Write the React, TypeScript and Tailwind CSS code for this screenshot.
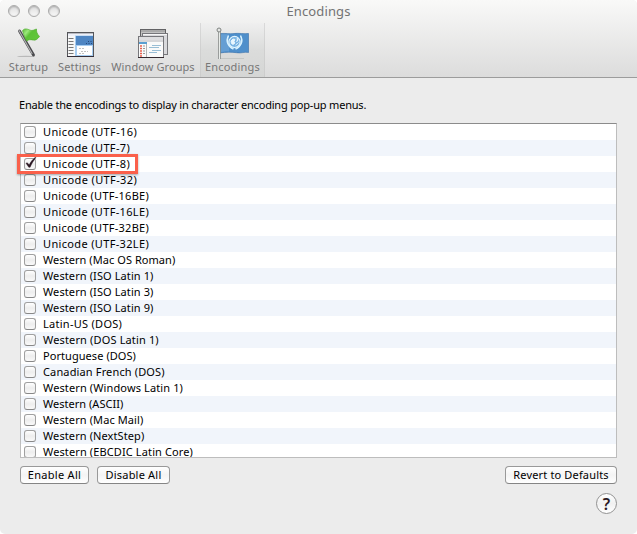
import React from "react";

const encodings: { name: string; spacing: string }[] = [
  { name: "Unicode (UTF-16)", spacing: "tracking-[0.38px]" },
  { name: "Unicode (UTF-7)", spacing: "tracking-[0.36px]" },
  { name: "Unicode (UTF-8)", spacing: "tracking-[0.36px]" },
  { name: "Unicode (UTF-32)", spacing: "tracking-[0.38px]" },
  { name: "Unicode (UTF-16BE)", spacing: "tracking-[0.26px]" },
  { name: "Unicode (UTF-16LE)", spacing: "tracking-[0.34px]" },
  { name: "Unicode (UTF-32BE)", spacing: "tracking-[0.26px]" },
  { name: "Unicode (UTF-32LE)", spacing: "tracking-[0.34px]" },
  { name: "Western (Mac OS Roman)", spacing: "tracking-[0.06px]" },
  { name: "Western (ISO Latin 1)", spacing: "tracking-[0.1px]" },
  { name: "Western (ISO Latin 3)", spacing: "tracking-[0.1px]" },
  { name: "Western (ISO Latin 9)", spacing: "tracking-[0.1px]" },
  { name: "Latin-US (DOS)", spacing: "tracking-[0.28px]" },
  { name: "Western (DOS Latin 1)", spacing: "tracking-[0.15px]" },
  { name: "Portuguese (DOS)", spacing: "tracking-[0.06px]" },
  { name: "Canadian French (DOS)", spacing: "tracking-[0.14px]" },
  { name: "Western (Windows Latin 1)", spacing: "tracking-[0.12px]" },
  { name: "Western (ASCII)", spacing: "tracking-[0.02px]" },
  { name: "Western (Mac Mail)", spacing: "tracking-[0.1px]" },
  { name: "Western (NextStep)", spacing: "tracking-[0.1px]" },
  { name: "Western (EBCDIC Latin Core)", spacing: "tracking-[0.12px]" },
];

function StartupIcon() {
  return (
    <svg width="32" height="32" viewBox="0 0 32 32">
      <defs>
        <linearGradient id="green" x1="0" x2="1" y1="0" y2="0.6">
          <stop offset="0" stopColor="#58b935" />
          <stop offset="0.3" stopColor="#9be87c" />
          <stop offset="0.5" stopColor="#5cc236" />
          <stop offset="1" stopColor="#62c63b" />
        </linearGradient>
      </defs>
      <ellipse cx="13" cy="29.4" rx="9" ry="0.7" fill="#b9b9b9" />
      <path d="M6.500 4 20.500 28" stroke="#4b4b4e" strokeWidth="2.900" strokeLinecap="round" />
      <path d="M6 3.500 19 26.500" stroke="#b4b4b6" strokeWidth="1.100" strokeLinecap="round" />
      <path d="M9.500 3.800C11 1.200 14 1.600 17 3.200c3 1 4-.7 6.500-1.200-.3 2.800.7 5 3 7.500-2 2.500-3.400 4-6.200 3.600-2.700-.5-4.300-1-6.500 1C11.500 11.300 11 7.300 9.500 3.800Z" fill="url(#green)" stroke="#51ad30" strokeWidth="0.7" />
    </svg>
  );
}

function SettingsIcon() {
  return (
    <svg width="32" height="32" viewBox="0 0 32 32">
      <rect x="3.500" y="5.500" width="26" height="24" fill="#f8f8f8" stroke="#55565a" />
      <path d="M4 6.500h25" stroke="#b9bbc2" />
      <path d="M4 8h25" stroke="#eef0f8" strokeWidth="2" />
      <rect x="11" y="8.500" width="18" height="20.500" fill="#a7cdf1" />
      <rect x="12" y="9" width="17" height="9" fill="#4f86c3" />
      <path d="M4.500 11.500h5M4.500 14.500h5M4.500 17.500h5M4.500 20.500h5M4.500 23.500h5M4.500 26.500h5" stroke="#777" />
      <rect x="13" y="19" width="15" height="9" fill="#fff" />
      <path d="M15 21.500h5M17 24.500h7M15 26.500h6" stroke="#c2c2c2" strokeDasharray="2 1" />
      <path d="M24 14.500h4M22 16.500h6" stroke="#274a7c" strokeDasharray="1 1.500" />
      <path d="M3 29.500h27" stroke="#342e38" />
    </svg>
  );
}

function WindowGroupsIcon() {
  return (
    <svg className="-ml-0.5" width="32" height="32" viewBox="0 0 32 32">
      <rect x="4.500" y="-1.500" width="25" height="19" transform="translate(0 0)" fill="none" />
      <rect x="4.500" y="2.500" width="25" height="15" fill="#c2c2c2" stroke="#626264" />
      <path d="M5 4h24" stroke="#aaa" strokeWidth="2" />
      <rect x="6.500" y="6.500" width="25" height="21" fill="#d9d9dc" stroke="#77777b" />
      <path d="M7 7.500h24" stroke="#f6f6f6" />
      <rect x="2.500" y="9.500" width="25" height="21" fill="#fafafa" stroke="#77777b" />
      <path d="M3 11.500h24" stroke="#dedee0" strokeWidth="3" />
      <path d="M3 14h24" stroke="#b3b3b8" />
      <rect x="3" y="15" width="8" height="2" fill="#5a9fd1" />
      <path d="M10.500 17v13" stroke="#b5b5b5" />
      <path d="M4 19h2M4 21.500h2M4 24h2M4 26.500h2M4 29h2" stroke="#e8604e" strokeWidth="1.300" />
      <path d="M7 19h2M7 21.500h2M7 24h2M7 26.500h2" stroke="#999" />
      <path d="M16 18.500h9M13 20.500h10M16 23.500h9M13 25.500h8" stroke="#9abed5" />
      <path d="M2 30.500h26" stroke="#342a2f" />
    </svg>
  );
}

function EncodingsIcon() {
  return (
    <svg width="34" height="33" viewBox="0 0 34 33">
      <path d="M4 31.500h24" stroke="#c3c6c4" />
      <path d="M4 6.500C10 6.200 13 7 18 6.500S28 7 32.500 6.500v19c-4-.8-7 1-12 .2S10 25 4 26Z" fill="#4e8fcb" stroke="#376eaa" strokeWidth="0.600" />
      <path d="M5 7.500c4-.5 5 0 8 0v17c-3-.5-4 0-8 .5Z" fill="#75a9d8" opacity="0.6" />
      <circle cx="18.500" cy="15" r="5.600" fill="#7ab4e3" stroke="#e2f5ff" strokeWidth="1.100" />
      <path d="m15 14 2-2 2 .5-1 2 1 1.500-2 1.500-1.500-1Zm6-3 1 2-1.500 2m-1 3 2-1.500 1-1" fill="#e9f7ff" stroke="#ecf8ff" strokeWidth="0.900" />
      <path d="M12.500 8.500c-3 5.500-.5 11 5 13.500M24.500 8.500c3 5.500.5 11-5 13.500" fill="none" stroke="#d8f2ff" strokeWidth="1.500" />
      <path d="M3.500 4v28" stroke="#7f8481" strokeWidth="2.600" />
      <path d="M3.500 4v28" stroke="#e8ece9" strokeWidth="1.200" />
      <circle cx="3" cy="3" r="2" fill="#e5e7e5" stroke="#7e8280" />
    </svg>
  );
}

function Checkbox({ checked }: { checked: boolean }) {
  return (
    <span className="relative block h-3 w-3 shrink-0 rounded-[3px] border border-[#a0a0a0] border-b-[#888] bg-linear-to-b from-white via-[#ededed] to-[#fafafa]">
      {checked && (
        <svg className="absolute -left-px -top-[3px] overflow-visible" width="14" height="15" viewBox="0 0 14 15">
          <path d="m2 7.300 1.200-.6 2 2.100C6.600 6 8.600 3.400 11.300 1.200l.7.200C9.500 4.600 7.600 7.800 6.100 11.300H4.800Z" fill="#2b1723" stroke="#2b1723" strokeWidth="0.400" />
        </svg>
      )}
    </span>
  );
}

function ToolbarItem({ label, className, spacing, children }: { label: string; className: string; spacing: string; children: React.ReactNode }) {
  return (
    <div className={`flex h-[54px] shrink-0 flex-col items-center pt-1 text-[#777] ${className}`}>
      <div className="flex h-8 items-start justify-center">{children}</div>
      <span className={`h-4 whitespace-nowrap text-[11px] leading-4 ${spacing}`}>{label}</span>
    </div>
  );
}

function PushButton({ label, className }: { label: string; className: string }) {
  return (
    <button className={`flex h-[18px] items-center justify-center whitespace-nowrap rounded-[4px] border border-[#999] border-b-[#858585] bg-linear-to-b from-white via-[#f4f4f4] to-white pb-px text-[11px] leading-4 ${className}`}>
      {label}
    </button>
  );
}

export default function App() {
  return (
    <div className="h-[534px] w-[637px] bg-white font-['Noto_Sans','Open_Sans',sans-serif] text-black">
      <main className="flex h-full flex-col overflow-hidden rounded-[5px] bg-[#ececec]">
        <header className="h-[78px] shrink-0 border-b border-[#9c9c9c] bg-linear-to-b from-[#f9f9f8] to-[#dcdcdc]">
          <div className="grid h-[23px] grid-cols-[68px_1fr_68px] items-center">
            <div className="-mt-px flex gap-2 pl-2">
              {[0, 1, 2].map((i) => (
                <span key={i} className="h-3 w-3 rounded-full border border-[#aaa] bg-linear-to-b from-[#dedede] to-[#f8f8f8] shadow-[inset_0_1px_2px_#aaa]" />
              ))}
            </div>
            <h1 className="-mt-0.5 text-center text-[13px] leading-5 tracking-[0.12px] text-[#737373]">Encodings</h1>
          </div>
          <nav className="flex pl-1">
            <ToolbarItem label="Startup" className="w-[49px]" spacing="tracking-[0.16px]"><StartupIcon /></ToolbarItem>
            <ToolbarItem label="Settings" className="w-[53px]" spacing="tracking-[0.14px]"><SettingsIcon /></ToolbarItem>
            <ToolbarItem label="Window Groups" className="w-[94px]" spacing="tracking-[0.08px]"><WindowGroupsIcon /></ToolbarItem>
            <ToolbarItem label="Encodings" className="w-[65px] bg-linear-to-b from-[#efefef] via-[#dbdcdb] to-[#d5d6d5] shadow-[inset_1px_0_#c4c4c480,inset_-1px_0_#c4c4c480]" spacing="tracking-[0.2px]"><EncodingsIcon /></ToolbarItem>
          </nav>
        </header>
        <section className="flex flex-1 flex-col px-5 pt-[18px]">
          <p className="-ml-px h-[27px] whitespace-nowrap text-[11px] leading-[18px] tracking-[-0.19px]">Enable the encodings to display in character encoding pop-up menus.</p>
          <div className="h-[335px] w-[597px] shrink-0 border border-[#bdbdbd] border-t-[#8b8b8b] bg-white">
            <ul className="h-full [clip-path:inset(0_0_0_-10px)]">
              {encodings.map((encoding, i) => (
                <li key={encoding.name} className="relative flex h-4 items-center pl-[3px] odd:bg-white even:bg-[#f1f5fb]">
                  <Checkbox checked={i === 2} />
                  <span className={`ml-[7px] whitespace-nowrap text-[11px] leading-4 ${encoding.spacing}`}>{encoding.name}</span>
                  {i === 2 && <span className="absolute -left-1 -top-0.5 z-10 h-5 w-[121px] border-[3px] border-[#fa604b] shadow-[0_1px_2px_#0005]" />}
                </li>
              ))}
            </ul>
          </div>
          <div className="mt-2 flex">
            <PushButton label="Enable All" className="w-[69px] tracking-[0.3px]" />
            <PushButton label="Disable All" className="ml-2 w-[73px] tracking-[0.2px]" />
            <PushButton label="Revert to Defaults" className="ml-auto w-[112px] tracking-[0.16px]" />
          </div>
          <div className="mt-[9px] flex justify-end">
            <button className="flex h-[21px] w-[21px] items-center justify-center rounded-full border border-[#929292] bg-linear-to-b from-white via-[#f1f1f1] to-white text-[16px] font-semibold leading-none text-[#2b1822]">?</button>
          </div>
        </section>
      </main>
    </div>
  );
}
